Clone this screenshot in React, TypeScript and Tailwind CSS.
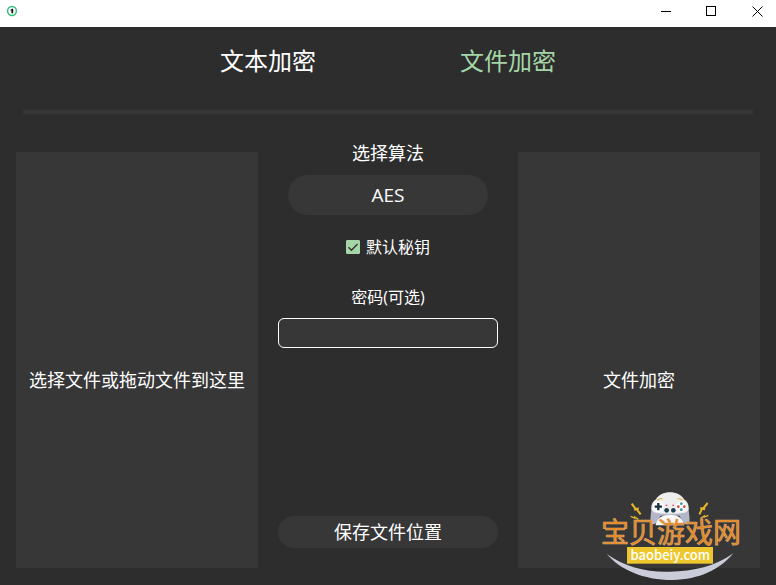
import { useState } from 'react';

const TABS = ['文本加密', '文件加密'];
const ALGORITHMS = ['AES', 'DES', 'RC4'];

const TitleBar = () => (
  <header className="flex h-[27px] items-start justify-between bg-white text-black">
    <svg className="ml-[6px] mt-[5px] h-3 w-3" viewBox="0 0 12 12" aria-hidden="true">
      <circle cx="6" cy="6" r="4.4" fill="#fff" stroke="#2fc07c" strokeWidth="1.5" />
      <path d="M4.3 5 6 3.8h1.2v4.5H5.4V5.6H4.3Z" fill="#111" />
    </svg>
    <div className="flex gap-2">
      <button type="button" aria-label="最小化" className="flex h-[22px] w-[38px] items-center justify-center">
        <svg className="h-[11px] w-[11px]" viewBox="0 0 11 11" shapeRendering="crispEdges">
          <path d="M1 5.5h10" stroke="currentColor" />
        </svg>
      </button>
      <button type="button" aria-label="最大化" className="flex h-[22px] w-[38px] items-center justify-center">
        <svg className="h-[11px] w-[11px]" viewBox="0 0 11 11" shapeRendering="crispEdges">
          <path d="M.5.5h9v9h-9Z" fill="none" stroke="currentColor" />
        </svg>
      </button>
      <button type="button" aria-label="关闭" className="flex h-[22px] w-[38px] items-center justify-center">
        <svg className="h-[11px] w-[11px]" viewBox="0 0 11 11">
          <path d="m.5.5 10 10M10.5.5l-10 10" stroke="currentColor" />
        </svg>
      </button>
    </div>
  </header>
);

const SiteLogo = () => (
  <svg
    className="pointer-events-none absolute bottom-[3px] right-[34px] h-[92px] w-[142px]"
    viewBox="30 30 426 276"
    role="img"
    aria-label="宝贝游戏网 baobeiy.com"
  >
    {/* controller */}
    <path d="M186 78c-3 18-6 38-4 48 2 8 12 8 16 3l14-22h56l14 22c4 5 14 5 16 0 2-14-1-33-4-51Z" fill="#b3b7c8" />
    <path d="M184 84c0-11 4-20 14-26 8-14 24-21 42-21s34 7 42 21c10 6 14 15 14 26 0 8-4 12-12 14l-20 3h-48l-20-3c-8-2-12-6-12-14Z" fill="#eeeeef" />
    <path d="M197 136c0-18 18-32 43-32s42 14 42 32Z" fill="#f8f8f8" />
    <path d="M202 61c4-4 9-5 15-5M263 56c6 0 11 1 15 5" fill="none" stroke="#e3b341" strokeWidth="4" />
    <circle cx="205" cy="80" r="16" fill="#fff" />
    <circle cx="274" cy="80" r="16" fill="#fff" />
    <path d="M205 69v22M194 80h22" stroke="#17313f" strokeWidth="7" />
    <circle cx="274" cy="71" r="4" fill="#2f9aa5" />
    <circle cx="265" cy="80" r="4" fill="#d5483f" />
    <circle cx="283" cy="80" r="4" fill="#d5483f" />
    <circle cx="274" cy="89" r="4" fill="#2f8a9c" />
    <path d="M227 76h5M247 76h5" stroke="#c94a5c" strokeWidth="4" />
    <circle cx="230" cy="91" r="7" fill="#1b3d50" />
    <circle cx="250" cy="91" r="7" fill="#1b3d50" />
    {/* lightning */}
    <g fill="none" stroke="#e9b52b" strokeWidth="6">
      <path d="m125 71 13 17-5 2 10-4 0 6 9 11" />
      <path d="m353 69-13 16 5 3-11-3 0 6-6 12" />
      <path d="m122 109 12 5 0-3 11 7" strokeWidth="4" />
      <path d="m355 106-12 5 0-3-11 7" strokeWidth="4" />
    </g>
    <path d="M50 222c56 39 118 55 188 53 74-1 138-16 192-55-40 49-103 79-182 80C158 300 91 269 50 222Z" fill="#cbccd9" />
    <rect x="111" y="201" width="258" height="50" fill="#edc72d" />
    <text
      x="243"
      y="190"
      textAnchor="middle"
      fontSize="84"
      className="fill-[#e88718] stroke-[#dba671] font-['Noto_Sans_CJK_SC',sans-serif] font-normal"
      strokeWidth="2"
    >
      宝贝游戏网
    </text>
    <text
      x="241"
      y="240"
      textAnchor="middle"
      fontSize="39"
      className="fill-white font-['Noto_Sans_CJK_SC',sans-serif] font-medium"
    >
      baobeiy.com
    </text>
  </svg>
);

const App = () => {
  const [tab, setTab] = useState(1);
  const [defaultKey, setDefaultKey] = useState(true);

  return (
    <div className="relative flex min-h-screen flex-col bg-[#2d2d2d] font-['Open_Sans','Noto_Sans_CJK_SC',sans-serif] text-white">
      <TitleBar />

      <nav className="mx-auto grid w-[480px] grid-cols-2 pb-[31px] pt-4">
        {TABS.map((name, i) => (
          <button
            key={name}
            type="button"
            onClick={() => setTab(i)}
            className={`text-2xl leading-9 ${i === tab ? 'text-[#a5d6a7]' : 'text-white'}`}
          >
            {name}
          </button>
        ))}
      </nav>
      <hr className="mx-[23px] h-1 border-0 bg-[#363636]" />

      <main className="grid flex-1 grid-cols-[1fr_220px_1fr] gap-5 px-4 pb-[17px] pt-[27px] text-lg leading-6">
        <button type="button" className="mt-[11px] bg-[#373737] pt-10">
          选择文件或拖动文件到这里
        </button>

        <div className="flex flex-col items-center">
          <label htmlFor="algorithm">选择算法</label>
          <select
            id="algorithm"
            className="mt-[10px] h-10 w-[200px] appearance-none rounded-full bg-[#373737] text-center text-[19px] [text-align-last:center]"
          >
            {ALGORITHMS.map((name) => (
              <option key={name}>{name}</option>
            ))}
          </select>

          <label className="mt-5 flex items-center gap-[6px] text-base leading-6">
            <span className="grid">
              <input
                type="checkbox"
                checked={defaultKey}
                onChange={(e) => setDefaultKey(e.target.checked)}
                className="peer col-start-1 row-start-1 h-[14px] w-[14px] appearance-none rounded-[1px] border border-[#a5d6a7] checked:bg-[#a5d6a7]"
              />
              <svg
                className="pointer-events-none invisible col-start-1 row-start-1 h-[14px] w-[14px] peer-checked:visible"
                viewBox="0 0 14 14"
              >
                <path d="m2.5 7.3 3 3L11.5 4" fill="none" stroke="#2d2d2d" strokeWidth="1.3" />
              </svg>
            </span>
            默认秘钥
          </label>

          <label htmlFor="password" className="mt-[26px] text-base leading-6">
            密码(可选)
          </label>
          <input
            id="password"
            type="password"
            className="mt-[9px] h-[30px] w-full rounded-md border border-white bg-[#373737] px-2 text-base"
          />

          <button type="button" className="mb-5 mt-auto h-8 w-full rounded-full bg-[#373737]">
            保存文件位置
          </button>
        </div>

        <button type="button" className="mt-[11px] bg-[#373737] pt-10">
          文件加密
        </button>
      </main>

      <SiteLogo />
    </div>
  );
};

export default App;
